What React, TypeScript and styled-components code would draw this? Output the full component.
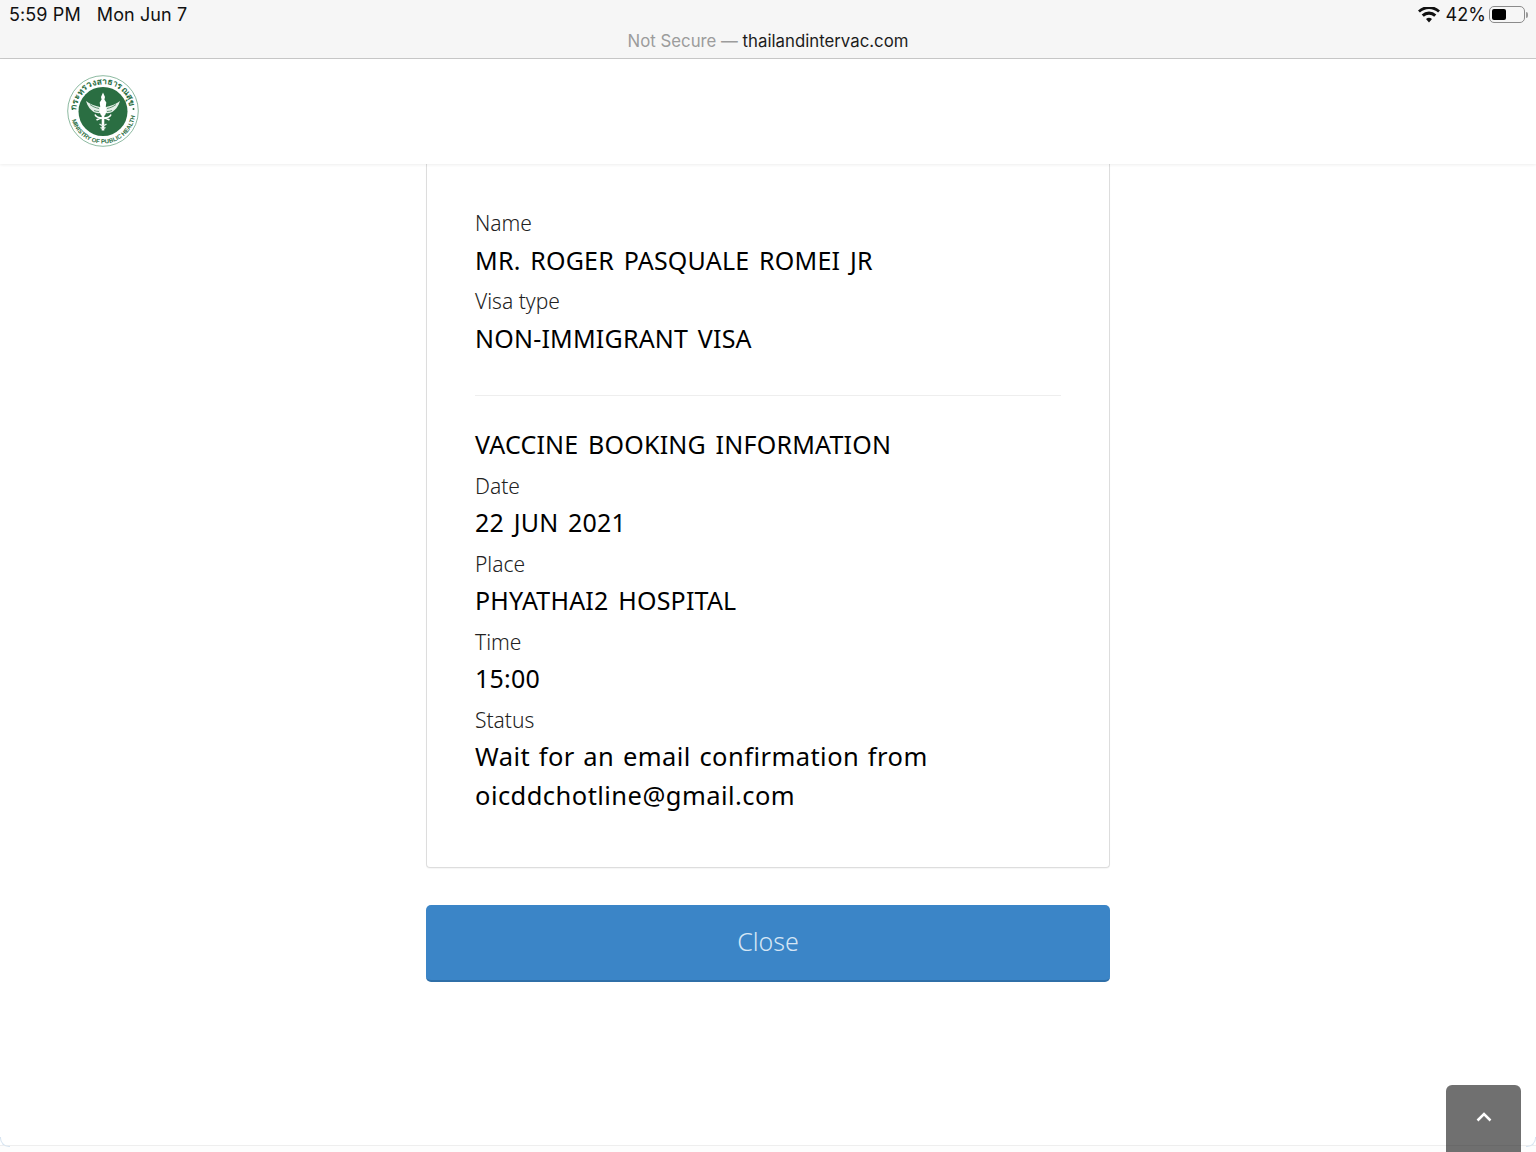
import React from "react";
import styled, { createGlobalStyle } from "styled-components";

const GlobalStyle = createGlobalStyle`
  html, body {
    margin: 0;
    padding: 0;
    background: #fff;
  }
  * {
    box-sizing: border-box;
  }
`;

const bookingFields = [
  { label: "Date", value: "22 JUN 2021" },
  { label: "Place", value: "PHYATHAI2 HOSPITAL" },
  { label: "Time", value: "15:00" },
];

const Logo: React.FC = () => (
  <svg width="74" height="74" viewBox="0 0 74 74">
    <circle cx="37" cy="37" r="35.300" fill="#fff" stroke="#5c9c78" strokeWidth="0.7" />
    <circle cx="37" cy="37.500" r="24.500" fill="#2a6e42" />
    <defs>
      <path id="logoTop" d="M10 37a27 27 0 0 1 54 0" />
      <path id="logoBottom" d="M4.500 37a32.500 32.500 0 0 0 65 0" />
    </defs>
    <text fontFamily="'Noto Sans CJK SC', 'Noto Sans', sans-serif" fontSize="8.500" fontWeight="700" fill="#2a6e42">
      <textPath href="#logoTop" startOffset="1">กระทรวงสาธารณสุข</textPath>
    </text>
    <text fontFamily="'Liberation Sans', sans-serif" fontSize="6" fontWeight="700" fill="#2a6e42">
      <textPath href="#logoBottom" startOffset="9">MINISTRY OF PUBLIC HEALTH</textPath>
    </text>
    <circle cx="6.500" cy="35" r="1" fill="#2a6e42" />
    <circle cx="67.500" cy="35" r="1" fill="#2a6e42" />
    <path d="M37 18.500l2 4.500-.6 2.500 1.900 3-.5 4 .8 5-1.600 4h-4l-1.600-4 .8-5-.5-4 1.900-3-.6-2.500z" fill="#fff" />
    <path d="M34 33c-5-1-10.500-3-14-6 1.500 5 4.500 9.500 9 11.500 2 .9 3.800 1 5 .5z" fill="#e4efe8" />
    <path d="M40 33c5-1 10.500-3 14-6-1.500 5-4.500 9.500-9 11.500-2 .9-3.800 1-5 .5z" fill="#e4efe8" />
    <path d="M24 30.500c2.500 2 5.500 3.300 9 4M28 36.500c1.500.6 3.200 1 5 1M50 30.500c-2.500 2-5.500 3.300-9 4M46 36.500c-1.500.6-3.200 1-5 1" fill="none" stroke="#2a6e42" strokeWidth="0.7" />
    <path d="M29 40.500c1.500 4.500 14.500 4.500 16 0M30.500 46c4-2.600 9-2.600 13 0" fill="none" stroke="#fff" strokeWidth="1.500" />
    <path d="M37 41v15.500" stroke="#fff" strokeWidth="2.600" />
    <path d="M33.500 50c2 1.800 5 1.800 7 0M34.500 53.500c1.700 1.300 3.300 1.300 5 0" fill="none" stroke="#e4efe8" strokeWidth="1.100" />
  </svg>
);

const App: React.FC = () => (
  <Page>
    <GlobalStyle />
    <StatusArea>
      <StatusRow>
        <Clock>
          <span>5:59 PM</span>
          <span>Mon Jun 7</span>
        </Clock>
        <Indicators>
          <svg width="22" height="16" viewBox="0 0 22 16">
            <path
              d="M11 15.500l-3-3.400a4.300 4.300 0 0 1 6 0zM5.800 9.800L3.700 7.500a10.600 10.600 0 0 1 14.600 0l-2.100 2.300a7.500 7.500 0 0 0-10.400 0zM1.900 5.600L0 3.500a16 16 0 0 1 22 0l-1.900 2.100a13.200 13.200 0 0 0-18.200 0z"
              fill="#111"
            />
          </svg>
          <span>42%</span>
          <Battery>
            <BatteryLevel />
          </Battery>
          <BatteryTip />
        </Indicators>
      </StatusRow>
      <AddressLine>
        <NotSecure>Not Secure — </NotSecure>thailandintervac.com
      </AddressLine>
    </StatusArea>
    <Header>
      <Logo />
    </Header>
    <Main>
      <Card>
        <Label>Name</Label>
        <Value>MR. ROGER PASQUALE ROMEI JR</Value>
        <Label>Visa type</Label>
        <Value>NON-IMMIGRANT VISA</Value>
        <Divider />
        <Heading>VACCINE BOOKING INFORMATION</Heading>
        {bookingFields.map((field) => (
          <React.Fragment key={field.label}>
            <BookingLabel>{field.label}</BookingLabel>
            <BookingValue>{field.value}</BookingValue>
          </React.Fragment>
        ))}
        <BookingLabel>Status</BookingLabel>
        <StatusValue>
          Wait for an email confirmation from
          <br />
          oicddchotline@gmail.com
        </StatusValue>
      </Card>
      <CloseButton>Close</CloseButton>
    </Main>
    <PageEdge />
    <BackToTop>
      <svg width="16" height="10" viewBox="0 0 16 10">
        <path d="M1.500 8.500L8 2l6.500 6.500" fill="none" stroke="#fff" strokeWidth="2.500" />
      </svg>
    </BackToTop>
  </Page>
);

const Page = styled.div`
  position: relative;
  display: flex;
  flex-direction: column;
  width: 1536px;
  height: 1152px;
  overflow: hidden;
  background: #fff;
  font-family: "Noto Sans", sans-serif;
`;
const StatusArea = styled.div`
  flex: none;
  height: 59px;
  background: #f6f6f6;
  border-bottom: 1px solid #c9c9c9;
  color: #111;
  font-family: "Inter", sans-serif;
`;
const StatusRow = styled.div`
  display: flex;
  justify-content: space-between;
  align-items: center;
  height: 29px;
  padding: 0 8px 0 9px;
  font-size: 18px;
  letter-spacing: 0.1px;
`;
const Clock = styled.div`
  display: flex;
  gap: 16px;
`;
const Indicators = styled.div`
  display: flex;
  align-items: center;
  gap: 5px;
`;
const Battery = styled.div`
  width: 36px;
  height: 17px;
  margin-left: -2px;
  padding: 2px;
  border: 1px solid #8b8b8b;
  border-radius: 5px;
`;
const BatteryLevel = styled.div`
  width: 14px;
  height: 100%;
  background: #000;
  border-radius: 2px;
`;
const BatteryTip = styled.div`
  width: 2px;
  height: 6px;
  margin-left: -4px;
  background: #9a9a9a;
  border-radius: 0 2px 2px 0;
`;
const AddressLine = styled.div`
  text-align: center;
  font-size: 16.800px;
  line-height: 24px;
  color: #1c1c1c;
`;
const NotSecure = styled.span`
  color: #9c9c9c;
`;
const Header = styled.header`
  position: relative;
  z-index: 1;
  flex: none;
  display: flex;
  align-items: center;
  height: 105px;
  padding: 0 0 1px 66px;
  background: #fff;
  box-shadow: 0 1px 3px rgba(0, 0, 0, 0.07);
`;
const Main = styled.main`
  flex: none;
  width: 684px;
  margin: 0 auto;
`;
const Card = styled.section`
  height: 704px;
  padding: 39px 48px 0;
  background: #fff;
  border: 1px solid #dddddd;
  border-top: none;
  border-radius: 0 0 4px 4px;
  box-shadow: 0 1px 1px rgba(0, 0, 0, 0.04);
`;
const Label = styled.div`
  height: 38px;
  font-size: 21px;
  font-weight: 300;
  line-height: 41px;
  color: #222;
`;
const BookingLabel = styled(Label)`
  height: 37px;
`;
const Value = styled.div`
  margin-bottom: 1px;
  font-size: 25px;
  line-height: 39px;
  letter-spacing: 0.2px;
  word-spacing: 3px;
  color: #000;
`;
const BookingValue = styled(Value)`
  margin-bottom: 2px;
`;
const StatusValue = styled(BookingValue)`
  font-size: 25.500px;
  letter-spacing: 0.45px;
  word-spacing: 1.500px;
`;
const Heading = styled(Value)`
  margin-bottom: 2px;
`;
const Divider = styled.hr`
  height: 1px;
  margin: 37px 0 29px;
  border: none;
  background: #eeeeee;
`;
const CloseButton = styled.button`
  display: block;
  width: 100%;
  height: 77px;
  margin-top: 37px;
  padding-bottom: 4px;
  background: #3b85c7;
  border: none;
  border-bottom: 2px solid #2f6fa8;
  border-radius: 5px;
  color: #d5e6f5;
  font-family: "Noto Sans", sans-serif;
  font-size: 25px;
  font-weight: 300;
`;
const PageEdge = styled.div`
  position: relative;
  flex: none;
  height: 7px;
  margin-top: auto;
  background: #fdfdfd;
  border-top: 1px solid #eeeeee;

  &::before,
  &::after {
    content: "";
    position: absolute;
    top: -9px;
    width: 9px;
    height: 9px;
    border-bottom: 1px solid #d6e4f1;
  }
  &::before {
    left: 0;
    border-left: 1px solid #d6e4f1;
    border-bottom-left-radius: 9px;
  }
  &::after {
    right: 0;
    border-right: 1px solid #d6e4f1;
    border-bottom-right-radius: 9px;
  }
`;
const BackToTop = styled.div`
  position: absolute;
  top: 1085px;
  left: 1446px;
  display: flex;
  justify-content: center;
  align-items: center;
  width: 75px;
  height: 67px;
  padding-bottom: 3px;
  background: rgba(0, 0, 0, 0.56);
  border-radius: 6px 6px 0 0;
`;

export default App;
